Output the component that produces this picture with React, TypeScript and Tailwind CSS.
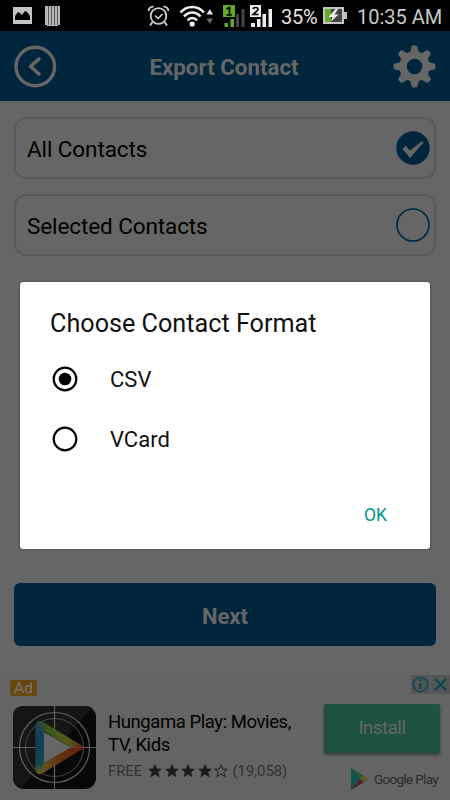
const gearTeeth = [0, 45, 90, 135, 180, 225, 270, 315];

function StatusBar() {
  return (
    <div className="flex h-[31px] items-center bg-black text-[20px] leading-none text-[#c8c8c8]">
      <svg className="ml-[13px]" width="19" height="17" viewBox="0 0 19 17">
        <path fill="#c4c4c4" d="M0 0h19v17H0z" />
        <path fill="#000" d="M2 13V9l3-4 2 1 2 2 3-4 2 1 3 4v4z" />
      </svg>
      <svg className="ml-[13px]" width="15" height="20" viewBox="0 0 15 20">
        <path fill="#b8b8b8" d="M0 0h15v19h-2v1H2v-1H0z" />
        <path stroke="#555" strokeWidth="1" d="M3.5 0v19M6.5 0v19M9.5 0v19M12.5 0v19" />
      </svg>
      <svg className="ml-[87px]" width="23" height="22" viewBox="0 0 23 22" fill="none" stroke="#c8c8c8">
        <circle cx="11.5" cy="11" r="7.8" strokeWidth="1.8" />
        <path strokeWidth="2" d="M1.5 6a5 5 0 0 1 5-4.5M16.5 1.5a5 5 0 0 1 5 4.5M5.5 17L3 20.5M17.5 17l2.5 3.500" />
        <path strokeWidth="1.7" d="m8 10.5 3 3 4.5-4.5" />
      </svg>
      <svg className="ml-[9px]" width="35" height="22" viewBox="0 0 35 22" fill="none">
        <path stroke="#eee" strokeWidth="2.5" d="M1.5 7.500c6-7.500 17.500-7.500 23.500 0M5 11.500c4.500-5.500 12-5.500 16.500 0M8.500 15.500c2.500-3.200 7-3.200 9.500 0" />
        <circle cx="13.200" cy="19" r="2.600" fill="#eee" />
        <path fill="#ddd" d="m30.800 4 3.300 5.500h-6.600z" />
        <path fill="#666" d="m30.800 19-3.300-5.500h6.600z" />
      </svg>
      <svg className="ml-[9px]" width="23" height="22" viewBox="0 0 23 22">
        <path fill="#65a927" d="M0 0h12v12H0zM1.5 18H5v4H1.500zM7.500 14H11v8H7.500z" />
        <path fill="#444" d="M13 9h3v13h-3zM18.500 4h3v18h-3z" />
        <path fill="none" stroke="#000" strokeWidth="1.700" d="m3.500 4 3-1.500v8M3.500 10h5.500" />
      </svg>
      <svg className="ml-[4px]" width="23" height="22" viewBox="0 0 23 22">
        <path fill="#eee" d="M0 0h11v12H0zM1 18h4v4H1zM7 14h3.500v8H7zM12.500 9H16v13h-3.500zM18.500 4H22v18h-3.500z" />
        <path fill="none" stroke="#000" strokeWidth="1.700" d="M3 4c.5-2 5-2.200 5 .5C8 6 5 7.500 3 9.500h5.500" />
      </svg>
      <span className="ml-[8px] w-[42px] pt-[2px] tracking-[-0.2px] text-[#e4e4e4]">35%</span>
      <svg width="25" height="18" viewBox="0 0 25 18">
        <path fill="#c4c4c4" d="M0 0h21v5h3v7h-3v5H0z" />
        <path fill="#444" d="M2 2h17v13H2z" />
        <path fill="#65a927" d="M2 2h6v13H2z" />
        <path fill="#eee" d="m12.500 2-7 8h4L8 14.500l7.500-7h-4L15 2z" />
      </svg>
      <span className="ml-[9px] pt-[2px] whitespace-nowrap">10:35 AM</span>
    </div>
  );
}

function Header() {
  return (
    <header className="flex h-[70px] items-center justify-between bg-[#00263e] px-[14px]">
      <svg width="43" height="43" viewBox="0 0 43 43" fill="none" stroke="#666" strokeLinecap="round" strokeLinejoin="round">
        <circle cx="21.300" cy="21.500" r="19.300" strokeWidth="3.400" />
        <path strokeWidth="3.600" d="m25 14-8.500 7.500L25 29" />
      </svg>
      <h1 className="mr-[2px] pt-[3px] text-[22.300px] font-bold text-[#666]">Export Contact</h1>
      <svg width="43" height="43" viewBox="0 0 43 43">
        <g fill="#666">
          {gearTeeth.map((angle) => (
            <path
              key={angle}
              transform={`rotate(${angle} 21.5 21.5)`}
              d="M17 8l1.500-6q.4-1.500 1.500-1.500h3q1.100 0 1.500 1.500L26 8z"
            />
          ))}
        </g>
        <circle cx="21.500" cy="21.500" r="11.500" fill="none" stroke="#666" strokeWidth="7.500" />
      </svg>
    </header>
  );
}

function ContactOption({ label, checked }: { label: string; checked?: boolean }) {
  return (
    <div className="flex h-[62px] items-center justify-between rounded-[12px] border-2 border-[#5a5a5a] pr-[4.500px] pl-[11px]">
      <span className="pt-[4px] text-[22.500px] tracking-[-0.100px] text-black">{label}</span>
      <svg width="34" height="34" viewBox="0 0 34 34">
        {checked ? (
          <>
            <circle cx="17" cy="17" r="16.700" fill="#00263e" />
            <path fill="#666" d="m6.500 18 3-3.200 4.500 4.700L25.500 10.500l2.200.8L14 27z" />
          </>
        ) : (
          <circle cx="17" cy="17" r="16" fill="none" stroke="#06293f" strokeWidth="1.700" />
        )}
      </svg>
    </div>
  );
}

function Radio({ label, checked }: { label: string; checked?: boolean }) {
  return (
    <div className="flex h-[60px] items-center">
      <svg width="26" height="26" viewBox="0 0 26 26">
        <circle cx="13" cy="13" r="11.300" fill="none" stroke="#000" strokeWidth="2.200" />
        {checked && <circle cx="13" cy="13" r="6.300" />}
      </svg>
      <span className="ml-[32px] pt-px text-[22px] text-[#111]">{label}</span>
    </div>
  );
}

function FormatDialog() {
  return (
    <div className="absolute top-[282px] left-[20px] flex h-[267px] w-[410px] flex-col rounded-[3px] bg-white px-[30px] shadow-[0_0_2px_#333]">
      <h2 className="mt-[27px] mb-[10px] text-[25.200px] leading-[30px] whitespace-nowrap text-[#111]">
        Choose Contact Format
      </h2>
      <div className="pl-[2px]">
        <Radio label="CSV" checked />
        <Radio label="VCard" />
      </div>
      <button className="mt-[33px] mr-[13px] self-end text-[17.500px] leading-[26px] text-[#009688]">OK</button>
    </div>
  );
}

function HungamaLogo() {
  return (
    <svg className="shrink-0" width="83" height="83" viewBox="0 0 83 83">
      <defs>
        <linearGradient id="blue" x1="0" y1="0" x2="0" y2="1">
          <stop offset="0" stopColor="#26494f" />
          <stop offset="0.400" stopColor="#0c3e5a" />
          <stop offset="0.800" stopColor="#174552" />
          <stop offset="1" stopColor="#656025" />
        </linearGradient>
        <linearGradient id="green">
          <stop offset="0" stopColor="#2b5020" />
          <stop offset="0.650" stopColor="#535e18" />
          <stop offset="1" stopColor="#641e18" />
        </linearGradient>
        <linearGradient id="orange">
          <stop offset="0" stopColor="#656025" />
          <stop offset="0.500" stopColor="#65300d" />
          <stop offset="1" stopColor="#641e18" />
        </linearGradient>
      </defs>
      <rect width="83" height="83" rx="11" fill="#080808" />
      <path fill="#151515" d="M0 11Q0 0 11 0h61q4 0 7 2L8 82q-8-2-8-11z" />
      <g fill="none" stroke="#606060">
        <circle cx="41.500" cy="41.500" r="35" strokeWidth="1.200" />
        <circle cx="41.500" cy="41.500" r="29" strokeWidth="0.700" />
        <path strokeWidth="1.200" d="M41.500 0v83M0 41.500h83" />
      </g>
      <path fill="url(#green)" d="M23 18q2-5 7-2l42 25.500H58L31 25z" />
      <path fill="url(#orange)" d="M72 41.500 30 67q-5 3-7-2l8-8 27-15.500z" />
      <path fill="url(#blue)" d="M22.500 18q1-3 5-2.500L31 24v33l-4 11q-4 0-4.500-4z" />
      <path fill="#666" d="m31 26 27 15.500L31 57z" />
    </svg>
  );
}

function Star({ filled }: { filled?: boolean }) {
  return (
    <svg width="14" height="14" viewBox="0 0 14 14">
      <path
        fill={filled ? "#1b1b1b" : "none"}
        stroke="#1b1b1b"
        strokeWidth="0.900"
        d="m7 .8 1.700 4.200 4.500.2-3.500 2.800 1.300 4.500L7 10l-4 2.500L4.300 8 .8 5.200 5.300 5z"
      />
    </svg>
  );
}

function AdBanner() {
  return (
    <div className="mt-[28px] flex h-[126px] bg-[#646464]">
      <div className="w-[108px] shrink-0 pt-[6px]">
        <div className="ml-[10px] flex h-[16px] w-[27px] items-center justify-center rounded-[2px] bg-[#67480f] pt-px text-[15.500px] text-[#777]">
          Ad
        </div>
        <div className="mt-[10px] ml-[12.500px]">
          <HungamaLogo />
        </div>
      </div>
      <div className="w-[215px] shrink-0 pt-[37px]">
        <p className="text-[18.500px] leading-[22.500px] tracking-[-0.430px] whitespace-nowrap text-black">
          Hungama Play: Movies,
          <br />
          TV, Kids
        </p>
        <div className="mt-[5px] flex h-[20px] items-center text-[14.800px] text-[#333]">
          <span className="w-[40px]">FREE</span>
          <span className="flex w-[84.500px] gap-[2.500px]">
            <Star filled />
            <Star filled />
            <Star filled />
            <Star filled />
            <Star />
          </span>
          <span>(19,058)</span>
        </div>
      </div>
      <div className="flex w-[127px] flex-col">
        <div className="mt-px flex h-[19px] justify-end gap-px">
          <svg width="19" height="19" viewBox="0 0 19 19">
            <path fill="#555" d="M0 0h19v19H0z" />
            <g fill="none" stroke="#004951">
              <circle cx="9.500" cy="9.500" r="7.200" strokeWidth="1.300" />
              <path strokeWidth="2" d="M9.500 4.500v2M9.500 8v6" />
            </g>
          </svg>
          <svg width="19" height="19" viewBox="0 0 19 19">
            <path fill="#555" d="M0 0h19v19H0z" />
            <path stroke="#004951" strokeWidth="2" d="m4 4 11 11M15 4 4 15" />
          </svg>
        </div>
        <button className="mt-[10px] ml-[1px] h-[49px] w-[116px] rounded-[2px] bg-[#1e5140] pt-px text-[18.500px] tracking-[-0.400px] text-[#666] shadow-[0_2px_3px_#3a3a3a]">
          Install
        </button>
        <div className="mt-[15px] ml-[27px] flex items-center gap-[5px]">
          <svg width="19" height="22" viewBox="0 0 19 22">
            <path fill="#164f50" d="M1 0v22l10-11z" />
            <path fill="#285735" d="m1 0 12.500 7.500L10 11z" />
            <path fill="#5f5626" d="m13.500 7.500 5 3.500-5 3.500L10 11z" />
            <path fill="#542025" d="m1 22 12.500-7.500L10 11z" />
          </svg>
          <span className="pt-px text-[13.500px] tracking-[-0.680px] whitespace-nowrap text-[#2c2c2c]">Google Play</span>
        </div>
      </div>
    </div>
  );
}

export default function App() {
  return (
    <div className="relative flex h-[800px] w-[450px] flex-col overflow-hidden bg-[#666] font-[Roboto,sans-serif]">
      <StatusBar />
      <Header />
      <main className="flex flex-col px-[14px] pt-[16px]">
        <div className="flex flex-col gap-[15px]">
          <ContactOption label="All Contacts" checked />
          <ContactOption label="Selected Contacts" />
        </div>
        <button className="mt-[327px] h-[63px] rounded-[6px] bg-[#00263e] pt-[3px] text-[22px] font-bold text-[#666]">
          Next
        </button>
      </main>
      <AdBanner />
      <FormatDialog />
    </div>
  );
}
